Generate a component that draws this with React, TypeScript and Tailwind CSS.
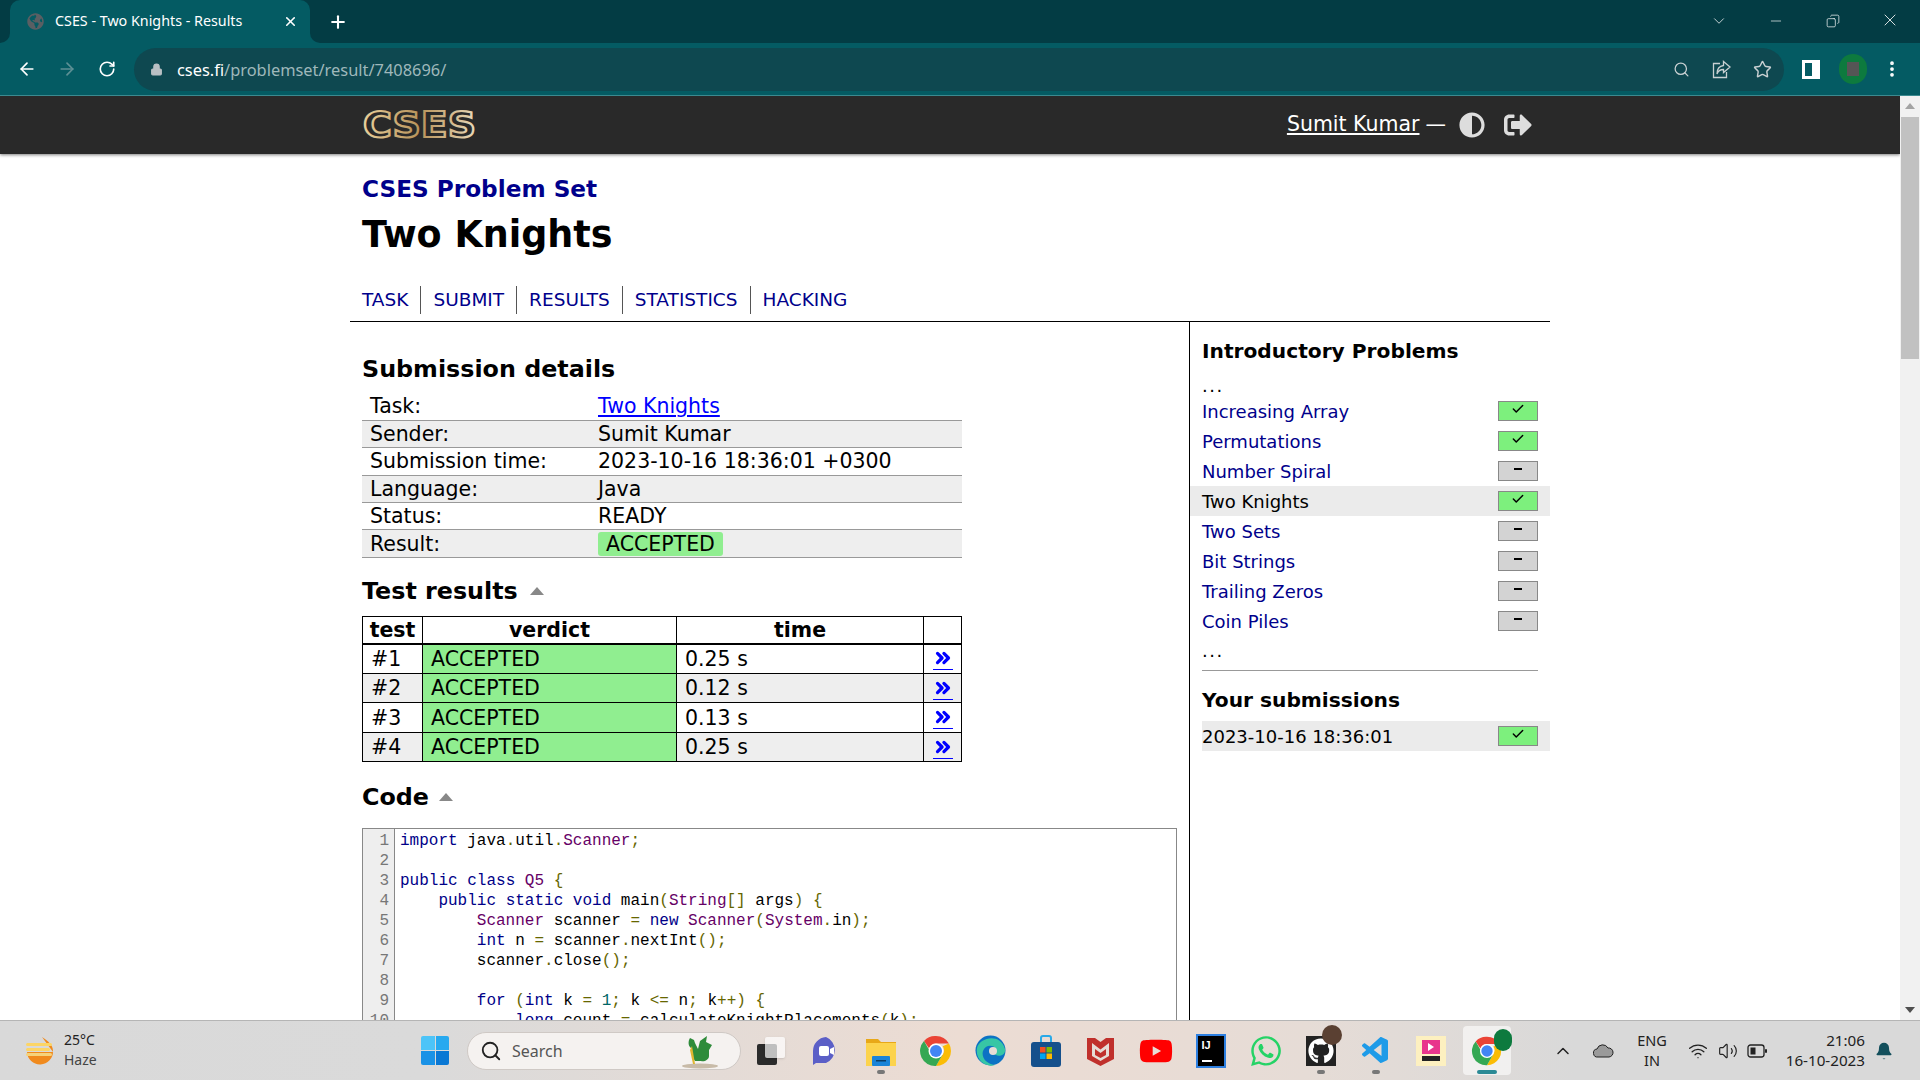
import { FaAdjust, FaSignOutAlt, FaWhatsapp, FaYoutube, FaGithub, FaGlobeAmericas } from "react-icons/fa";
import { VscVscode } from "react-icons/vsc";
import {
  ArrowLeft, ArrowRight, RotateCw, Lock, Search, Star, X, Plus, ChevronDown, ChevronsRight,
  Minus, Copy, ChevronUp, Wifi, Volume2, Bell, MoreVertical, Check,
} from "lucide-react";

const details = [
  ["Task:", "Two Knights"],
  ["Sender:", "Sumit Kumar"],
  ["Submission time:", "2023-10-16 18:36:01 +0300"],
  ["Language:", "Java"],
  ["Status:", "READY"],
  ["Result:", "ACCEPTED"],
];

const tests = [
  ["#1", "0.25 s"],
  ["#2", "0.12 s"],
  ["#3", "0.13 s"],
  ["#4", "0.25 s"],
];

const problems: [string, boolean, boolean][] = [
  ["Increasing Array", true, false],
  ["Permutations", true, false],
  ["Number Spiral", false, false],
  ["Two Knights", true, true],
  ["Two Sets", false, false],
  ["Bit Strings", false, false],
  ["Trailing Zeros", false, false],
  ["Coin Piles", false, false],
];

const keywords = new Set(["import", "public", "class", "static", "void", "new", "int", "for", "long"]);
const types = new Set(["Scanner", "Q5", "String", "System"]);

const code = [
  "import java.util.Scanner;",
  "",
  "public class Q5 {",
  "    public static void main(String[] args) {",
  "        Scanner scanner = new Scanner(System.in);",
  "        int n = scanner.nextInt();",
  "        scanner.close();",
  "",
  "        for (int k = 1; k <= n; k++) {",
  "            long count = calculateKnightPlacements(k);",
];

function CodeLine({ text }: { text: string }) {
  const tokens = text.match(/\s+|[A-Za-z_][A-Za-z0-9_]*|\d+|[^\sA-Za-z0-9_]/g) ?? [];
  return (
    <div className="h-5 whitespace-pre leading-5">
      {tokens.map((t, i) => {
        let color = "text-black";
        if (keywords.has(t)) color = "text-[#000088]";
        else if (types.has(t)) color = "text-[#660066]";
        else if (/^\d+$/.test(t)) color = "text-[#006666]";
        else if (/^[^\sA-Za-z0-9_]$/.test(t)) color = "text-[#666600]";
        return <span key={i} className={color}>{t}</span>;
      })}
    </div>
  );
}

function Badge({ done }: { done: boolean }) {
  return (
    <span className={`flex h-5 w-10 items-center justify-center border border-[#888] ${done ? "bg-[#7df07d]" : "bg-[#d3d3d3]"}`}>
      {done ? <Check size={14} strokeWidth={2.5} className="text-black -mt-1" /> : <span className="-mt-1 h-[2px] w-2 bg-black" />}
    </span>
  );
}

function Triangle() {
  return <span className="inline-block h-0 w-0 border-x-[7px] border-b-[8px] border-x-transparent border-b-[#888]" />;
}

function ChromeIcon({ size = 32 }: { size?: number }) {
  return (
    <svg width={size} height={size} viewBox="0 0 48 48">
      <path d="M24 4a20 20 0 0 1 17.3 10H24a10 10 0 0 0-9.3 6.3L8 10.5A20 20 0 0 1 24 4z" fill="#ea4335" />
      <path d="M41.3 14A20 20 0 0 1 24 44l8.6-15A10 10 0 0 0 33 17.5L41.3 14z" fill="#fbbc05" />
      <path d="M24 44A20 20 0 0 1 8 10.5l8.6 15A10 10 0 0 0 32.6 29L24 44z" fill="#34a853" />
      <circle cx="24" cy="24" r="10" fill="#fff" />
      <circle cx="24" cy="24" r="8" fill="#4285f4" />
    </svg>
  );
}

function TaskSlot({ children, dot }: { children: React.ReactNode; dot?: boolean }) {
  return (
    <div className="relative flex h-[60px] w-[55px] shrink-0 items-center justify-center">
      {children}
      {dot && <span className="absolute bottom-[7px] h-[4px] w-2 rounded-full bg-[#777]" />}
    </div>
  );
}

function Taskbar() {
  return (
    <div className="flex h-[60px] shrink-0 items-center border-t border-[#b5b5b5] bg-[linear-gradient(90deg,#d9d9d9_0%,#dadada_22%,#ecdcd3_50%,#e6dcd6_68%,#d9d9d9_82%,#d9d9d9_100%)] font-['Noto_Sans',sans-serif]">
      <div className="flex w-[421px] shrink-0 items-center pl-[25px]">
        <svg width="29" height="29" viewBox="0 0 29 29">
          <path d="M17 1c6 4 11 8 11 14a13 13 0 0 1-26 1h26L17 1z" fill="#f08a1d" />
          <rect x="1" y="7" width="26" height="3" rx="1.5" fill="#fcd566" />
          <rect x="1" y="12" width="24" height="3" rx="1.5" fill="#fcd566" />
          <rect x="1" y="17" width="26" height="3" rx="1.5" fill="#f5d27a" />
        </svg>
        <div className="ml-[10px] -mt-[1px] flex flex-col text-[14px] leading-5 text-[#222]">
          <span>25°C</span>
          <span className="text-[#444]">Haze</span>
        </div>
      </div>
      <div className="grid h-[29px] w-[28px] shrink-0 grid-cols-2 gap-[1px]">
        <span className="rounded-tl-[2px] bg-[#4cc4f8]" />
        <span className="rounded-tr-[2px] bg-[#27a9ef]" />
        <span className="rounded-bl-[2px] bg-[#1a92e6]" />
        <span className="rounded-br-[2px] bg-[#0a78d4]" />
      </div>
      <div className="ml-[18px] mr-[2px] flex h-[38px] w-[274px] shrink-0 items-center rounded-full border border-[#cfc9c5] bg-[#f5f2f0] pl-[12px] pr-5">
        <Search size={22} strokeWidth={2} className="text-[#222]" />
        <span className="ml-[10px] text-[16px] text-[#555]">Search</span>
        <svg className="ml-auto" width="40" height="36" viewBox="0 0 40 36">
          <ellipse cx="20" cy="33" rx="18" ry="2.5" fill="#c8bba8" />
          <path d="M10 5l4 2 1 3 3 6 2-8 7-5-1 6 6 3-3 5v6c0 4-5 6-8 5h-6c-3-4-3-9-4-13-3-2-3-7-1-10z" fill="#2e8b3a" />
          <path d="M12 13l3 18h-2l-3-14z" fill="#e0b630" />
        </svg>
      </div>
      <TaskSlot>
        <span className="relative block h-[28px] w-[28px]">
          <span className="absolute bottom-0 left-0 h-[21px] w-[20px] rounded-[2px] bg-[#2b2b2b]" />
          <span className="absolute right-0 top-0 h-[21px] w-[20px] rounded-[2px] bg-white/70 shadow-sm" />
        </span>
      </TaskSlot>
      <TaskSlot>
        <svg width="30" height="30" viewBox="0 0 30 30">
          <path d="M15 1a14 14 0 0 1 0 26H5l-3 2V15A14 14 0 0 1 15 1z" fill="#5b5fc7" />
          <rect x="8" y="10" width="10" height="10" rx="2" fill="#fff" />
          <path d="M19 13l4-2v8l-4-2z" fill="#fff" />
        </svg>
      </TaskSlot>
      <TaskSlot dot>
        <svg width="30" height="30" viewBox="0 0 30 30">
          <path d="M0 3h12l3 3h15v24H0z" fill="#e8a818" />
          <rect y="7" width="30" height="23" fill="#fcd34d" />
          <rect x="6" y="20" width="18" height="10" rx="1" fill="#1a84d8" />
          <rect x="10" y="24" width="10" height="1.5" fill="#0b3d66" />
        </svg>
      </TaskSlot>
      <TaskSlot><ChromeIcon size={36} /></TaskSlot>
      <TaskSlot>
        <svg width="31" height="31" viewBox="0 0 31 31">
          <circle cx="15.5" cy="15.5" r="15" fill="#0c72c4" />
          <path d="M2 13C4 3 25 -3 30 14c1 6-6 8-9 6-3-1-2-5 0-6-3-5-11-4-13 2-2 7 4 13 12 14-9 3-20-5-18-17z" fill="#37c6a5" />
          <circle cx="18" cy="16" r="4" fill="#e6dcd6" />
        </svg>
      </TaskSlot>
      <TaskSlot>
        <svg width="30" height="32" viewBox="0 0 30 32">
          <path d="M10 8V3a2 2 0 0 1 2-2h6a2 2 0 0 1 2 2v5" fill="none" stroke="#29a9e8" strokeWidth="2" />
          <rect y="7" width="30" height="25" rx="3" fill="#15508c" />
          <rect x="9" y="12" width="5.5" height="5.5" fill="#f25022" />
          <rect x="15.5" y="12" width="5.5" height="5.5" fill="#7fba00" />
          <rect x="9" y="18.5" width="5.5" height="5.5" fill="#00a4ef" />
          <rect x="15.5" y="18.5" width="5.5" height="5.5" fill="#ffb900" />
        </svg>
      </TaskSlot>
      <TaskSlot>
        <svg width="27" height="31" viewBox="0 0 27 31">
          <path d="M0 3h8l5.500 4L19 3h8v21l-13.500 7L0 24z" fill="#c0302c" />
          <path d="M5 8l8.500 6.500L22 8v13l-8.500 5L5 21z" fill="#e6dcd6" />
          <path d="M8 14l5.500 4 5.500-4v6l-5.500 3-5.500-3z" fill="#c0302c" />
        </svg>
      </TaskSlot>
      <TaskSlot><FaYoutube size={34} className="text-[#f00]" /></TaskSlot>
      <TaskSlot>
        <div className="flex h-[30px] w-[26px] flex-col justify-between bg-black p-[4px] font-['Liberation_Sans',sans-serif] text-[11px] font-bold leading-none text-white shadow-[0_0_0_2px_#2d7fe0]">
          <span>IJ</span>
          <span className="h-[2px] w-[10px] bg-white" />
        </div>
      </TaskSlot>
      <TaskSlot><FaWhatsapp size={34} className="text-[#25d366]" /></TaskSlot>
      <TaskSlot dot>
        <div className="relative flex h-[30px] w-[30px] items-center justify-center bg-[#222]">
          <FaGithub size={26} className="text-white" />
          <span className="absolute -right-[6px] -top-[11px] h-5 w-5 rounded-full bg-[#5a4032]" />
        </div>
      </TaskSlot>
      <TaskSlot dot><VscVscode size={32} className="text-[#1e9be8]" /></TaskSlot>
      <TaskSlot>
        <div className="flex h-[30px] w-[30px] flex-col items-center justify-center bg-[#fdf0c0]">
          <span className="flex h-[14px] w-[18px] items-center justify-center bg-[#e8358c]">
            <span className="h-0 w-0 border-y-[4px] border-l-[6px] border-y-transparent border-l-white" />
          </span>
          <span className="mt-[2px] h-[5px] w-[18px] bg-[#222]" />
        </div>
      </TaskSlot>
      <div className="relative ml-[5px] flex h-[49px] w-[48px] shrink-0 items-center justify-center rounded-[4px] bg-white/60">
        <ChromeIcon size={34} />
        <span className="absolute -right-[1px] top-[3px] h-[22px] w-[18px] rounded-full bg-[#0d7a3e]" />
        <span className="absolute bottom-[1px] h-[4px] w-[20px] rounded-full bg-[#2b8a95]" />
      </div>
      <div className="ml-[42px] flex items-center text-[#222]">
        <ChevronUp size={20} strokeWidth={1.8} />
        <svg className="ml-[20px]" width="21" height="14" viewBox="0 0 21 14">
          <path d="M5 13a4 4 0 0 1-1-8 6 6 0 0 1 11-1 4.500 4.500 0 0 1 1 9z" fill="#9a9a9a" stroke="#222" strokeWidth="1" />
        </svg>
        <div className="ml-[21px] -mt-[1px] flex w-[34px] flex-col items-center text-[14.500px] leading-5">
          <span>ENG</span>
          <span>IN</span>
        </div>
        <Wifi size={20} strokeWidth={1.6} className="ml-[19px]" />
        <Volume2 size={20} strokeWidth={1.4} className="ml-[10px]" />
        <svg className="ml-[9px]" width="21" height="14" viewBox="0 0 21 14">
          <rect x="1" y="1" width="16" height="12" rx="2.500" fill="none" stroke="#222" strokeWidth="1.300" />
          <rect x="3.500" y="3.500" width="5" height="7" fill="#222" />
          <rect x="18" y="5" width="2" height="4" rx="1" fill="#222" />
        </svg>
        <div className="ml-[12px] -mt-[1px] flex w-[85px] flex-col items-end text-[15.200px] leading-5">
          <span>21:06</span>
          <span>16-10-2023</span>
        </div>
        <Bell size={20} fill="#134f5c" strokeWidth={0} className="ml-[9px]" />
      </div>
    </div>
  );
}

function BrowserChrome() {
  return (
    <div className="shrink-0 font-['Noto_Sans',sans-serif]">
      <div className="flex h-[43px] items-end bg-[#033c44] pl-[10px] text-white">
        <div className="relative flex h-[43px] w-[300px] items-center rounded-t-[10px] bg-[#045b63] pl-[17px]">
          <span className="absolute -left-[10px] bottom-0 h-[10px] w-[10px] bg-[#045b63]"><span className="block h-full w-full rounded-br-[10px] bg-[#033c44]" /></span>
          <span className="absolute -right-[10px] bottom-0 h-[10px] w-[10px] bg-[#045b63]"><span className="block h-full w-full rounded-bl-[10px] bg-[#033c44]" /></span>
          <FaGlobeAmericas size={17} className="text-[#5a5f63]" />
          <span className="ml-[11px] -mt-[2px] text-[14.300px]">CSES - Two Knights - Results</span>
          <X size={15} strokeWidth={2.5} className="ml-auto mr-[12px]" />
        </div>
        <Plus size={20} strokeWidth={2.5} className="mb-[11px] ml-[18px]" />
        <ChevronDown size={18} strokeWidth={1} className="mb-[13px] ml-[1362px]" />
        <Minus size={16} strokeWidth={1} className="mb-[14px] ml-[40px]" />
        <Copy size={14} strokeWidth={1.2} className="mb-[15px] ml-[42px] -scale-x-100" />
        <X size={20} strokeWidth={1} className="mb-[13px] ml-[40px]" />
      </div>
      <div className="flex h-[53px] items-center border-b border-[#3b8a90] bg-[#045b63] text-white">
        <ArrowLeft size={20} strokeWidth={2} className="ml-[17px]" />
        <ArrowRight size={20} strokeWidth={2} className="ml-[20px] text-[#5e9095]" />
        <RotateCw size={18} strokeWidth={2.2} className="ml-[21px]" />
        <div className="ml-[18px] flex h-[43px] w-[1650px] items-center rounded-full bg-[#0e4850] pl-[16px]">
          <Lock size={13} fill="#b9c0c4" strokeWidth={2} className="text-[#b9c0c4]" />
          <span className="ml-[14px] mt-[2px] text-[16.400px] text-white">cses.fi<span className="text-[#9fb8bb]">/problemset/result/7408696/</span></span>
          <Search size={17} strokeWidth={1.8} className="ml-auto text-[#c8d0d2]" />
          <svg className="ml-[22px] text-[#c8d0d2]" width="19" height="19" viewBox="0 0 19 19" fill="none" stroke="currentColor" strokeWidth="1.300">
            <path d="M8 3.500H1.500V17.500H14.500V12" />
            <path d="M11.500 1.500L18 7l-6.500 5.500V9.500C8 9.500 6 11 5 14c0-5 2.500-8 6.500-8.500z" />
          </svg>
          <Star size={19} strokeWidth={1.8} className="ml-[22px] mr-[12px] text-[#c8d0d2]" />
        </div>
        <span className="ml-[18px] h-[19px] w-[18px] border-[3px] border-r-[8px] border-white" />
        <span className="ml-[19px] h-[30px] w-[28px] rounded-full bg-[#0d7a3e] p-[8px]"><span className="block h-full w-full bg-[#555]" /></span>
        <MoreVertical size={20} strokeWidth={2.5} className="ml-[15px]" />
      </div>
    </div>
  );
}

function Scrollbar() {
  return (
    <div className="flex w-5 shrink-0 flex-col items-center bg-[#f1f1f1]">
      <span className="mt-[7px] h-0 w-0 border-x-[5px] border-b-[6px] border-x-transparent border-b-[#a3a3a3]" />
      <span className="mt-[8px] h-[242px] w-[18px] bg-[#c1c1c1]" />
      <span className="mb-[7px] mt-auto h-0 w-0 border-x-[5px] border-t-[6px] border-x-transparent border-t-[#505050]" />
    </div>
  );
}

export default function App() {
  return (
    <div className="flex h-screen w-full flex-col overflow-hidden bg-white font-['DejaVu_Sans',sans-serif] text-black">
      <BrowserChrome />
      <div className="flex min-h-0 flex-1">
        <div className="min-w-0 flex-1 overflow-hidden">
          <div className="h-[58px] bg-[#292929] shadow-[0_1px_3px_rgba(0,0,0,0.5)]">
            <div className="mx-auto flex h-full w-[1200px] items-center pl-3 pr-[18px]">
              <svg className="overflow-visible" width="116" height="30" viewBox="0 0 116 30">
                <defs>
                  <linearGradient id="gold" x1="0" y1="0" x2="1" y2="0">
                    <stop offset="0" stopColor="#e8cf9a" />
                    <stop offset="0.500" stopColor="#b8935a" />
                    <stop offset="1" stopColor="#e8d8b8" />
                  </linearGradient>
                </defs>
                <text x="1" y="27" textLength="113" lengthAdjust="spacingAndGlyphs" fontFamily="'DejaVu Sans'" fontWeight="700" fontSize="36" fill="#292929" stroke="url(#gold)" strokeWidth="2.200">CSES</text>
              </svg>
              <a className="ml-auto -mt-[2px] text-[20.500px] text-white underline">Sumit Kumar</a>
              <span className="ml-[6px] -mt-[2px] text-[20.500px] text-white">—</span>
              <FaAdjust size={26} className="ml-[13px] text-[#ddd]" />
              <FaSignOutAlt size={28} className="ml-[19px] text-[#ddd]" />
            </div>
          </div>
          <div className="mx-auto w-[1200px]">
            <div className="px-3 pt-[20px]">
              <div className="text-[23.200px] font-bold leading-[30px] text-[#00008b]">CSES Problem Set</div>
              <h1 className="mt-[9px] text-[36.500px] font-bold leading-[44px]">Two Knights</h1>
              <nav className="mt-[30px] flex h-[26px] items-center text-[18.500px] text-[#00008b]">
                {["TASK", "SUBMIT", "RESULTS", "STATISTICS", "HACKING"].map((n, i) => (
                  <a key={n} className={i === 0 ? "pr-3" : "border-l border-[#555] px-3"}>{n}</a>
                ))}
              </nav>
            </div>
            <div className="mt-[8px] flex border-t border-black">
              <div className="w-[840px] shrink-0 border-r border-black px-3">
                <h2 className="mt-[32px] text-[23.800px] font-bold leading-[30px]">Submission details</h2>
                <table className="mt-[9px] w-[600px] table-fixed border-collapse text-[20.500px]">
                  <tbody>
                    {details.map(([k, v], i) => (
                      <tr key={k} className={`h-[27.400px] border-b border-[#999] ${i % 2 ? "bg-[#eeeeee]" : ""}`}>
                        <td className="w-[236px] p-0 pl-2 leading-[26px]">{k}</td>
                        <td className="p-0 leading-[26px]">
                          {i === 0 ? <a className="text-[#0000ff] underline">{v}</a> : i === 5 ? <span className="inline-block h-[24px] rounded-[3px] bg-[#90ee90] px-2 leading-[24px]">{v}</span> : v}
                        </td>
                      </tr>
                    ))}
                  </tbody>
                </table>
                <h2 className="mt-[18px] flex items-center text-[23.800px] font-bold leading-[30px]">Test results <span className="ml-[12px] flex"><Triangle /></span></h2>
                <table className="mt-[10px] w-[600px] table-fixed border-collapse border border-black text-[20.500px] leading-[26px]">
                  <thead>
                    <tr className="h-[27px] border-b-2 border-black font-bold">
                      <th className="w-[60px] border-r border-black p-0">test</th>
                      <th className="w-[254px] border-r border-black p-0">verdict</th>
                      <th className="w-[247px] border-r border-black p-0">time</th>
                      <th className="p-0" />
                    </tr>
                  </thead>
                  <tbody>
                    {tests.map(([t, time], i) => (
                      <tr key={t} className={`h-[29.500px] border-b border-black ${i % 2 ? "bg-[#eeeeee]" : ""}`}>
                        <td className="border-r border-black p-0 pl-2">{t}</td>
                        <td className="border-r border-black bg-[#90ee90] p-0 pl-2">ACCEPTED</td>
                        <td className="border-r border-black p-0 pl-2">{time}</td>
                        <td className="p-0">
                          <a className="mx-auto block h-[23px] w-5 border-b border-[#0000ff] text-[#0000ff]">
                            <ChevronsRight size={22} strokeWidth={3.500} className="-ml-[1px]" />
                          </a>
                        </td>
                      </tr>
                    ))}
                  </tbody>
                </table>
                <h2 className="mt-[20px] flex items-center text-[23.800px] font-bold leading-[30px]">Code <span className="ml-[10px] flex"><Triangle /></span></h2>
                <div className="mt-[16px] flex border border-[#888] font-['Liberation_Mono',monospace] text-[16px]">
                  <div className="w-[32px] shrink-0 border-r border-[#888] bg-[#eeeeee] pt-[2px] pr-[5px] text-right leading-5 text-[#777]">
                    {code.map((_, i) => <div key={i} className="h-5">{i + 1}</div>)}
                  </div>
                  <div className="pl-[5px] pt-[2px]">
                    {code.map((line, i) => <CodeLine key={i} text={line} />)}
                  </div>
                </div>
              </div>
              <aside className="min-w-0 flex-1 px-3 pt-[14px] text-[18px]">
                <h3 className="text-[20.200px] font-bold leading-[30px]">Introductory Problems</h3>
                <div className="h-[30px] pt-[5px] leading-[30px] tracking-[1.500px]">...</div>
                {problems.map(([name, done, current]) => (
                  <div key={name} className={`-mx-3 flex h-[30px] items-center px-3 ${current ? "bg-[#ebebeb]" : ""}`}>
                    <a className={current ? "text-black" : "text-[#00008b]"}>{name}</a>
                    <span className="ml-auto"><Badge done={done} /></span>
                  </div>
                ))}
                <div className="h-[30px] leading-[30px] tracking-[1.500px]">...</div>
                <hr className="mt-1 border-[#999]" />
                <h3 className="mt-[14px] text-[20.200px] font-bold leading-[30px]">Your submissions</h3>
                <div className="-mr-3 mt-[6px] flex h-[30px] items-center bg-[#ebebeb] pr-3">
                  <span>2023-10-16 18:36:01</span>
                  <span className="ml-auto"><Badge done /></span>
                </div>
              </aside>
            </div>
          </div>
        </div>
        <Scrollbar />
      </div>
      <Taskbar />
    </div>
  );
}
